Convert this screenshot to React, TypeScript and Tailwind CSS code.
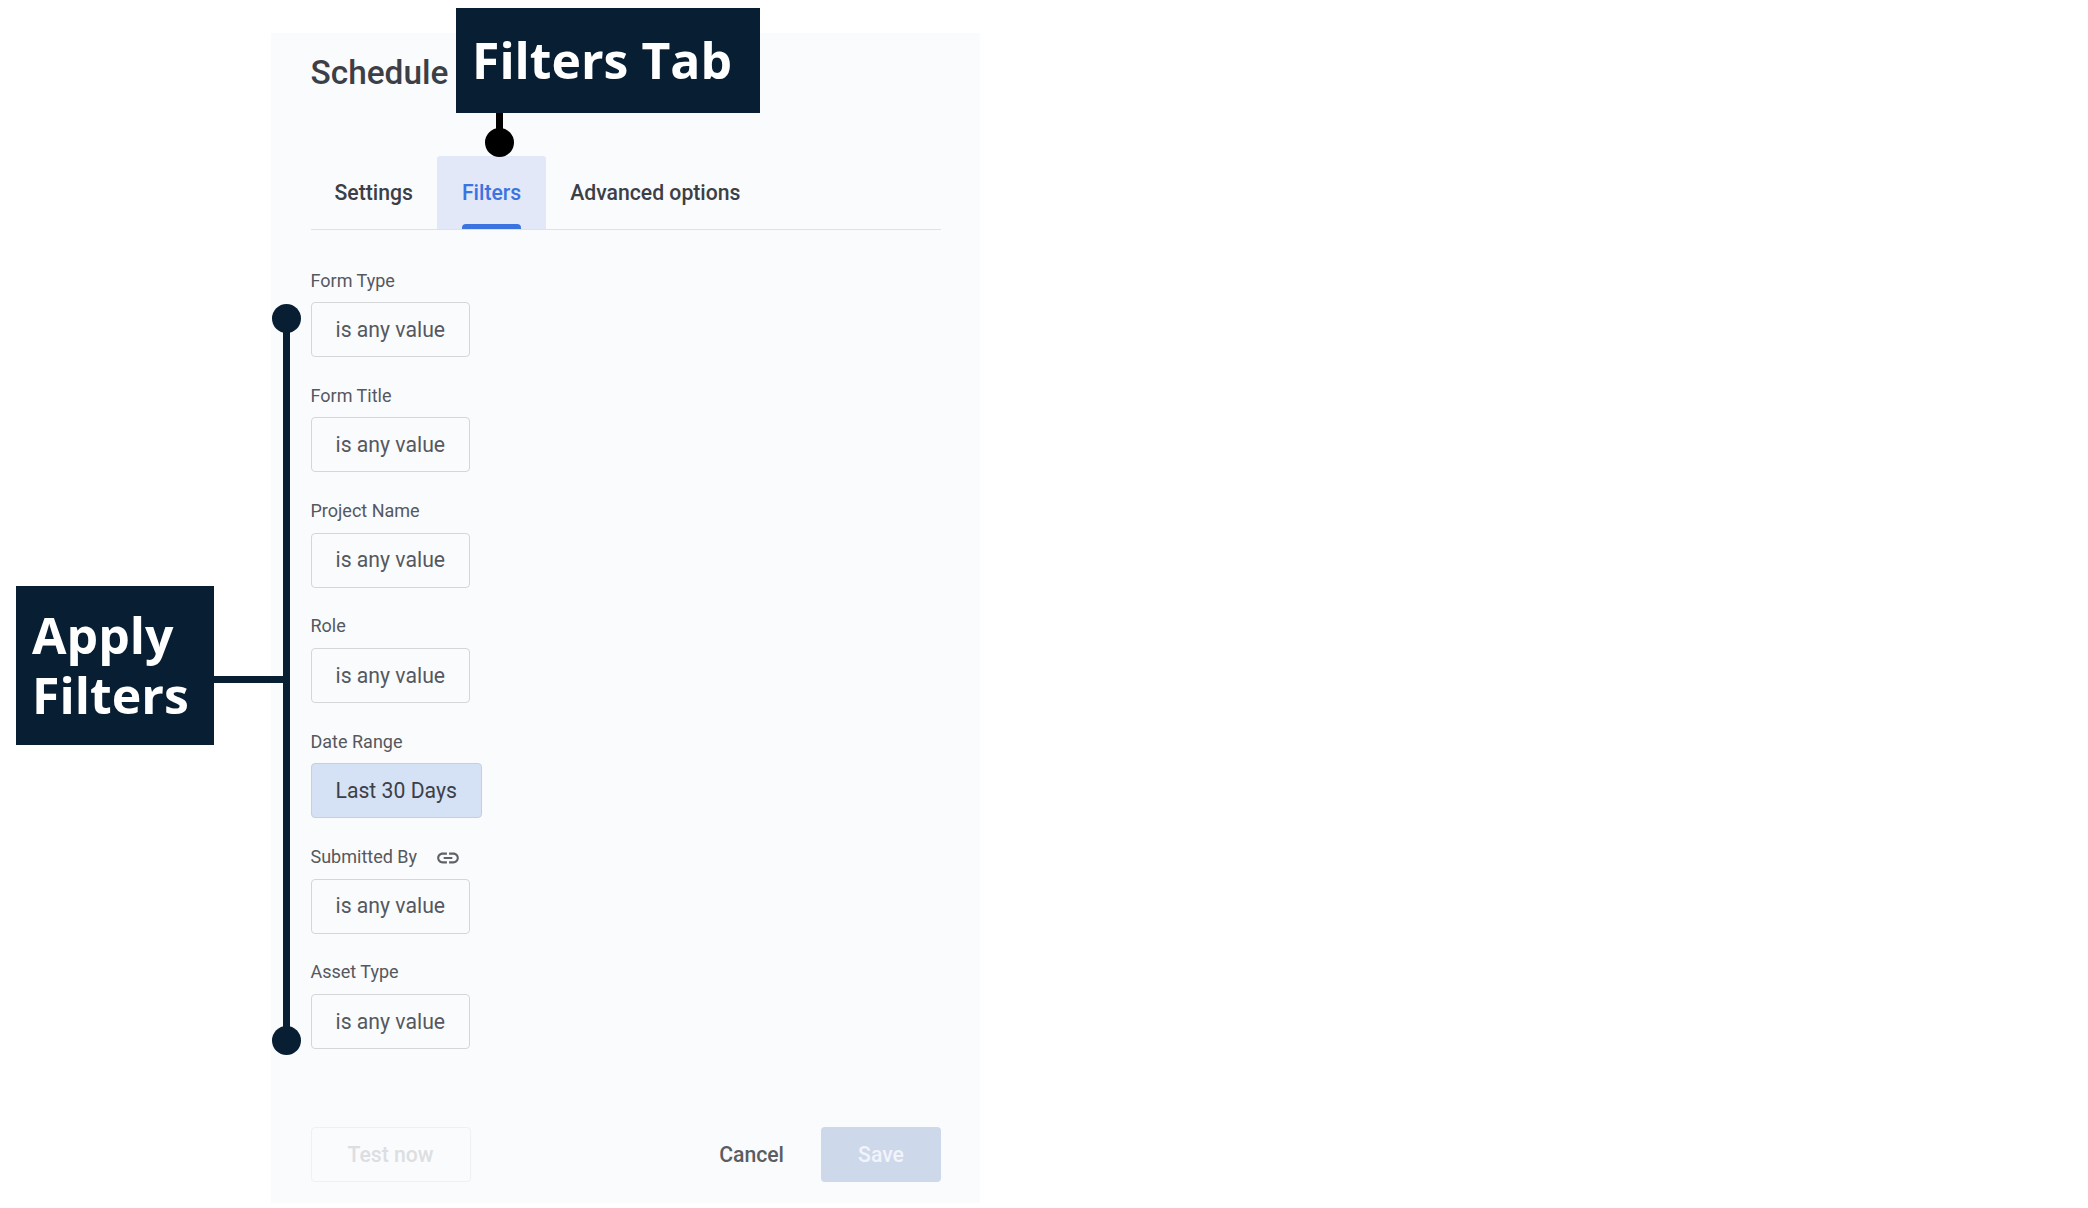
import React from 'react';

const DARK = 'bg-[#081e32]';

const fields = [
  { label: 'Form Type', value: 'is any value' },
  { label: 'Form Title', value: 'is any value' },
  { label: 'Project Name', value: 'is any value' },
  { label: 'Role', value: 'is any value' },
  { label: 'Date Range', value: 'Last 30 Days', active: true },
  { label: 'Submitted By', value: 'is any value', linked: true },
  { label: 'Asset Type', value: 'is any value' },
];

const LinkIcon = () => (
  <svg viewBox="0 0 24 24" className="w-[26px] h-[26px] ml-[18px] mt-[2px] text-[#5f6368]" fill="currentColor">
    <path d="M3.9 12c0-1.71 1.39-3.1 3.1-3.1h4V7H7c-2.76 0-5 2.24-5 5s2.24 5 5 5h4v-1.9H7c-1.71 0-3.1-1.39-3.1-3.1zM8 13h8v-2H8v2zm9-6h-4v1.9h4c1.71 0 3.1 1.39 3.1 3.1s-1.39 3.1-3.1 3.1h-4V17h4c2.76 0 5-2.24 5-5s-2.24-5-5-5z" />
  </svg>
);

const Field: React.FC<{ label: string; value: string; active?: boolean; linked?: boolean }> = ({ label, value, active, linked }) => (
  <div className="flex flex-col items-start">
    <div className="flex items-center h-[22px] text-[18px] text-[#55585e]">
      {label}
      {linked && <LinkIcon />}
    </div>
    <div
      className={`mt-[11px] h-[55px] px-[24px] flex items-center rounded-[4px] border text-[21.2px] ${
        active ? 'bg-[#d5e2f6] border-[#c5cfdf] text-[#3c4046]' : 'border-[#d4d6da] text-[#55585e]'
      }`}
    >
      {value}
    </div>
  </div>
);

const App: React.FC = () => {
  return (
    <div className="relative w-[2088px] h-[1208px] bg-white overflow-hidden font-['Roboto',sans-serif]">
      <div className="ml-[270.5px] pt-[33px]">
        <div className="w-[709.5px] h-[1170px] bg-[#fafbfd] pl-[40px] pr-[39px] flex flex-col">
          <h1 className="mt-[16px] h-[48px] flex items-center text-[33.4px] font-medium text-[#3c4046]">Schedule</h1>

          <div className="mt-[59px] h-[74px] flex border-b border-[#dfe1e5] text-[21.2px] font-medium text-[#3c4046]">
            <div className="px-[24px] flex items-center">Settings</div>
            <div className="relative px-[25px] flex items-center bg-[#e2e8f7] rounded-t-[3px] text-[#3b74e0]">
              Filters
              <div className="absolute left-[25px] right-[25px] bottom-0 h-[5px] rounded-t-[4px] bg-[#3b74e0]" />
            </div>
            <div className="px-[24px] flex items-center">Advanced options</div>
          </div>

          <div className="mt-[39px] flex flex-col gap-[27.33px]">
            {fields.map((f) => (
              <Field key={f.label} {...f} />
            ))}
          </div>

          <div className="mt-[78.5px] flex items-center text-[21.2px] font-medium">
            <div className="w-[160px] h-[55px] flex items-center justify-center rounded-[4px] border border-[#eff0f2] text-[#dcdee1]">
              Test now
            </div>
            <div className="ml-auto text-[#5a5d62]">Cancel</div>
            <div className="ml-[37px] w-[120px] h-[55px] flex items-center justify-center rounded-[4px] bg-[#ced8eb] text-[#f1f4fa]">
              Save
            </div>
          </div>
        </div>
      </div>

      {/* Filters Tab callout */}
      <div className={`absolute left-[456px] top-[8px] w-[304px] h-[105px] ${DARK} pl-[16px] pt-[18px] font-['Open_Sans',sans-serif] font-bold text-[49.9px] leading-[68px] text-white`}>
        Filters Tab
      </div>
      <div className="absolute left-[496px] top-[113px] w-[7px] h-[20px] bg-black" />
      <div className="absolute left-[485px] top-[128px] w-[29px] h-[29px] rounded-full bg-black" />

      {/* Apply Filters callout */}
      <div className={`absolute left-[16px] top-[586px] w-[198px] h-[159px] ${DARK} pl-[16px] pt-[19px] font-['Open_Sans',sans-serif] font-bold text-[50px] leading-[60px] text-white`}>
        Apply
        <br />
        Filters
      </div>
      <div className={`absolute left-[214px] top-[676px] w-[70px] h-[7px] ${DARK}`} />
      <div className={`absolute left-[283px] top-[318px] w-[7px] h-[722px] ${DARK}`} />
      <div className={`absolute left-[272px] top-[304px] w-[29px] h-[29px] rounded-full ${DARK}`} />
      <div className={`absolute left-[272px] top-[1026px] w-[29px] h-[29px] rounded-full ${DARK}`} />
    </div>
  );
};

export default App;
